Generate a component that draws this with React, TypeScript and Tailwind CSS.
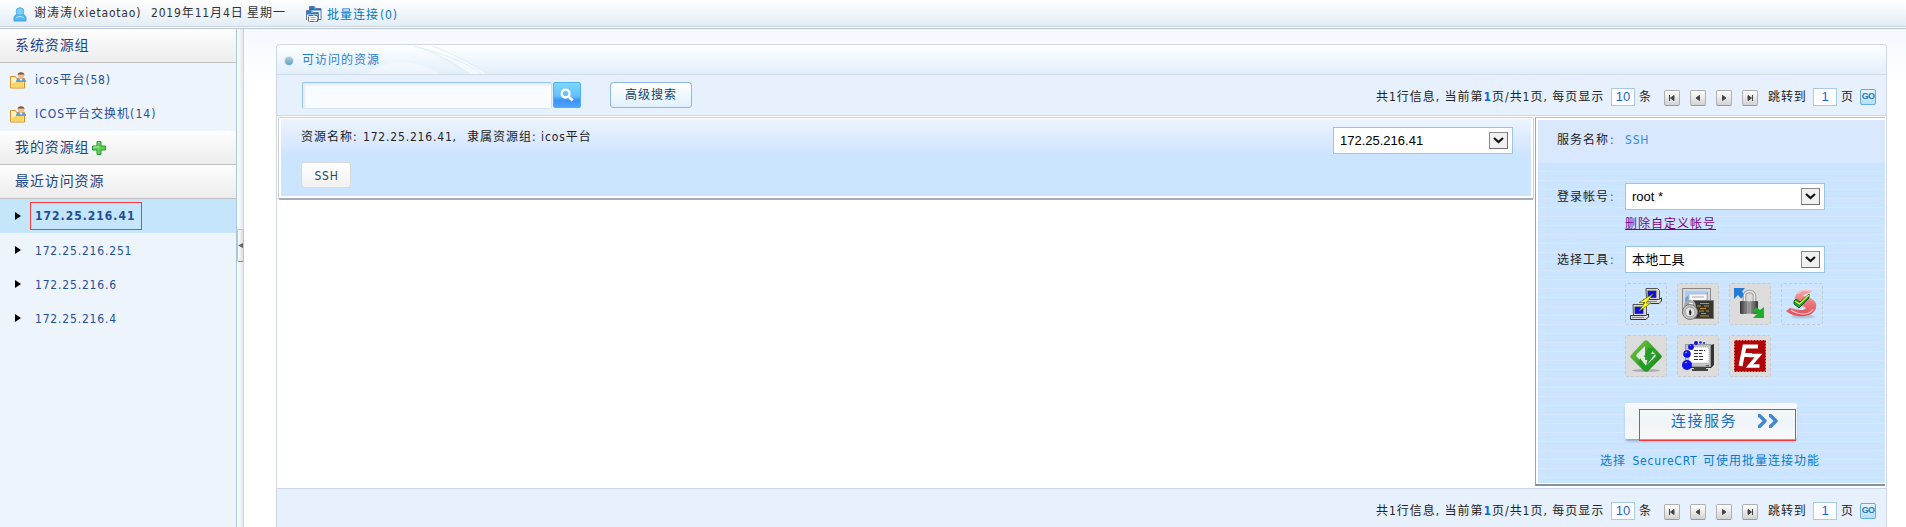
import React from "react";

const F = "font-['DejaVu_Sans_Condensed','Noto_Sans_CJK_SC',sans-serif]";

function L({ children, className = "" }: { children: React.ReactNode; className?: string }) {
  return <span className={`tracking-[0.8px] ${className}`}>{children}</span>;
}

function FolderUser() {
  return (
    <svg width="16" height="17" viewBox="0 0 16 17" className="shrink-0">
      <path d="M.5 4.500h5l1 2h8v9.500H.5z" fill="#fff3c4" stroke="#d98f27" />
      <path d="M1.500 12l6-3 6-2v8h-12z" fill="#f6d566" />
      <path d="M6 10c0-3 2-4 5-4s5 1 5 4z" fill="#5a9fe0" />
      <circle cx="11" cy="4" r="3" fill="#efc093" />
      <path d="M7.500 3.500C7.500 1 9 .3 11 .3S14.500 1 14.500 3.500l-1-1h-5z" fill="#8a4f2a" />
      <path d="M9.500 7l1.500 2L12.500 7z" fill="#fff" />
    </svg>
  );
}

function SideHeading({ children }: { children: React.ReactNode }) {
  return (
    <div className="flex h-[34px] shrink-0 items-center border-b border-[#bfbfbf] bg-gradient-to-b from-[#fdfdfd] to-[#ededed] pl-[15px] text-[14px] tracking-[0.9px] text-[#1c4587]">
      {children}
    </div>
  );
}

function RecentItem({ ip, active = false }: { ip: string; active?: boolean }) {
  return (
    <div className={`flex h-[34px] items-center pl-[15px] ${active ? "bg-[#c5e5fa]" : ""}`}>
      <svg width="6" height="8" viewBox="0 0 6 8"><path d="M0 0l6 4-6 4z" fill="#000" /></svg>
      <span className={active
        ? "ml-[9px] flex h-7 w-28 items-center border border-[#f23c3c] pl-[4px] font-bold tracking-[1px]"
        : "ml-[14px] pt-px tracking-[0.82px]"}>{ip}</span>
    </div>
  );
}

function Pager() {
  const icons = [
    "M5.500 5v6M10 5.500v5L6.500 8z",
    "M9.500 5.500v5L6 8z",
    "M6.500 5.500v5L10 8z",
    "M10.500 5v6M6 5.500v5L9.500 8z",
  ];
  return (
    <div className="flex items-center pr-[10px] text-[12px] text-[#222]">
      <span className="w-[235px] whitespace-nowrap tracking-[0.98px]">
        共1行信息, 当前第<b className="text-[#0a6ae0]">1</b>页/共1页, 每页显示
      </span>
      <span className="flex h-[18px] w-6 items-center justify-center border border-[#a9cbe0] bg-white font-['Liberation_Sans',sans-serif] text-[13px] tracking-normal text-[#1c63d0]">10</span>
      <span className="ml-1 w-[25px]">条</span>
      <span className="mt-0.5 flex gap-[10px]">
        {icons.map((d, i) => (
          <span key={i} className="h-4 w-4 rounded-[2px] border border-[#b0b0b0] border-b-[#999] bg-gradient-to-b from-white to-[#d2d2d2]">
            <svg width="14" height="14" viewBox="1 1 14 14"><path d={d} fill="#444" stroke="#444" strokeWidth="1" /></svg>
          </span>
        ))}
      </span>
      <span className="ml-[10px] w-[45px] whitespace-nowrap tracking-[0.9px]">跳转到</span>
      <span className="flex h-[18px] w-6 items-center justify-center border border-[#a9cbe0] bg-white font-['Liberation_Sans',sans-serif] text-[13px] tracking-normal text-[#1c63d0]">1</span>
      <span className="ml-1 w-[19px]">页</span>
      <span className="flex h-4 w-4 items-center justify-center rounded-[2px] border border-[#62aede] bg-gradient-to-b from-[#e6f6ff] to-[#b5def7] font-['Liberation_Sans',sans-serif] text-[9px] font-bold tracking-[-0.8px] text-[#2a78b8]">GO</span>
    </div>
  );
}

function Select({ value, className, textClass = "" }: { value: string; className: string; textClass?: string }) {
  return (
    <div className={`flex items-center justify-between border border-[#9cc4e4] bg-white pr-1 pl-[6px] font-['Liberation_Sans','Noto_Sans_CJK_SC',sans-serif] text-[13px] text-black ${className}`}>
      <span className={textClass}>{value}</span>
      <span className="flex h-[17px] w-[19px] items-center justify-center border border-t-[#8a8a8a] border-r-[#707070] border-b-[#707070] border-l-[#8a8a8a] bg-[#f0f0f0]">
        <svg width="11" height="7" viewBox="0 0 11 7"><path d="M1 1l4.500 4L10 1" fill="none" stroke="#111" strokeWidth="2.200" /></svg>
      </span>
    </div>
  );
}

function Field({ label }: { label: string }) {
  return <span className="w-[68px] whitespace-nowrap">{label}<span className="ml-px text-[#456]">:</span></span>;
}

function Tool({ children, gray = false }: { children: React.ReactNode; gray?: boolean }) {
  return (
    <div className={`flex h-[42px] w-[42px] items-center justify-center rounded-[3px] border border-dashed border-[#c6cacd] ${gray ? "bg-[#dcdcdc]" : ""}`}>
      <svg width="32" height="32" viewBox="0 0 32 32">{children}</svg>
    </div>
  );
}

function Computer({ x, y }: { x: number; y: number }) {
  return (
    <g transform={`translate(${x} ${y})`}>
      <path d="M3 .5h11.500l2 2v9h-13z" fill="#d8d8d8" stroke="#555" />
      <rect x="5" y="3" width="8" height="6.500" fill="#0a0af0" stroke="#333" strokeWidth=".8" />
      <path d="M.5 11.500h15l3-1.500v3l-2.500 2.500H.5z" fill="#dedede" stroke="#333" />
      <path d="M2 13.500h12" stroke="#888" />
    </g>
  );
}

function Tools() {
  return (
    <div className="grid w-[198px] grid-cols-[repeat(4,42px)] gap-[10px]">
      <Tool>
        <Computer x={13} y={0} />
        <Computer x={0} y={16} />
        <path d="M23 6L9 14.500h6L9 23l12-8h-5z" fill="#ffff16" stroke="#77770b" strokeWidth=".8" />
      </Tool>
      <Tool gray>
        <rect x=".5" y=".5" width="28" height="25" fill="#d4d9de" stroke="#888" />
        <rect x="3" y="3" width="23" height="18" fill="#68a2ed" />
        <path d="M3 10C10 3 18 11 26 4V3H3z" fill="#a8cdfa" />
        <rect x="7" y="6" width="18" height="15" fill="#f7f7f7" stroke="#bbb" />
        <path d="M10 9h12" stroke="#aaa" />
        <rect x="11.500" y="12.500" width="20" height="18" fill="#353531" stroke="#777" />
        <path d="M18 15.500h9M15 18h4m3 0h5M18 20.500h6M17 23h5m2 0h3M19 25.500h5M18 28h9" stroke="#bd9332" />
        <path d="M3.500 20v-3c0-5 9-5 9 0v3" fill="none" stroke="#aaa" strokeWidth="2.500" />
        <circle cx="8" cy="24" r="7.500" fill="#c6c6c6" stroke="#777" />
        <circle cx="8" cy="24" r="5" fill="#e5e5e5" stroke="#999" />
        <path d="M8 21l1.500 3L9 27H7.500L7 24z" fill="#222" />
      </Tool>
      <Tool gray>
        <defs><linearGradient id="lock"><stop stopColor="#333" /><stop offset=".5" stopColor="#b5b5b5" /><stop offset="1" stopColor="#333" /></linearGradient></defs>
        <path d="M0 0h11L8 3.500l3 4-4 3-3-3.500-4 4z" fill="#247bd8" />
        <path d="M10.500 14V8c0-6 10-6 10 0v6" fill="none" stroke="#999" strokeWidth="3.600" />
        <path d="M10.500 14V8c0-6 10-6 10 0v6" fill="none" stroke="#eee" strokeWidth="1.500" />
        <rect x="6" y="13" width="18" height="13" rx="1" fill="url(#lock)" />
        <path d="M9 14v11M12 14v11M15 14v11M18 14v11M21 14v11" stroke="#555" opacity=".6" />
        <path d="M30 19v11H19l4-4-4-3 3-4 4 3z" fill="#1eaf29" />
      </Tool>
      <Tool>
        <defs><linearGradient id="swirl" y2="1" x2="0"><stop stopColor="#f7a0a2" /><stop offset="1" stopColor="#dd4f56" /></linearGradient></defs>
        <ellipse cx="17" cy="28.500" rx="12" ry="2" fill="#94a9be" opacity=".5" />
        <path d="M26 3C19 0 9 3 9 11c0 6 9 7 11 9-3 4-11 1-16 0l-4 3c6 6 26 9 30-3 2-8-6-10-13-12 2-3 6-2 9-5z" fill="url(#swirl)" />
        <path d="M12 6c3-4 9-4 13-3M5 22c7 5 18 6 22-1" fill="none" stroke="#fbc6c4" strokeWidth="1.200" />
        <path d="M8 13l2-2 4 3 9-8v4L13 20l-5-4z" fill="#14a531" stroke="#143a10" strokeWidth=".8" />
        <path d="M9 13l4.500 3L23 7" fill="none" stroke="#f3e93a" strokeWidth="1.300" />
      </Tool>
      <Tool gray>
        <defs><linearGradient id="leaf" x2="1" y2="1"><stop stopColor="#77cf3e" /><stop offset="1" stopColor="#087b19" /></linearGradient></defs>
        <ellipse cx="16" cy="30.500" rx="14" ry="1.500" fill="#aaa" />
        <path d="M14 1q2-1.500 4 0l13 14q1.500 1.500 0 3L18 31q-2 1.500-4 0L1 18q-1.500-1.500 0-3z" fill="url(#leaf)" />
        <path d="M15 6L7 14q-1.500 1.500 0 3l9 9 9-9q1.500-1.500 0-3l-3-3-4 9h-3z" fill="#e4e9e1" />
        <path d="M18 8h6l-3 6h4l-9 12 2-9h-4zM10 18l6 8 6-6v6l-6 5-7-7z" fill="#239d27" />
      </Tool>
      <Tool gray>
        <path d="M5 5h24l3-1v21l-3 3H5z" fill="#333" />
        <rect x="3.500" y="4.500" width="25" height="22" fill="#c5c5c5" stroke="#999" />
        <rect x="7" y="7" width="20" height="16" rx="2" fill="#fff" stroke="#aaa" strokeDasharray="1 1" />
        <path d="M12 10.500h11M12 13.500h8M12 16.500h10M12 19.500h9" stroke="#333" strokeWidth="1.200" strokeDasharray="4 1" />
        <path d="M12 27h12v2h2v2H10v-2h2z" fill="#444" />
        <path d="M24 25.500h3" stroke="#e22" />
        <g fill="#1010ef"><circle cx="5" cy="25" r="5" /><circle cx="5" cy="14" r="3.800" /><circle cx="9" cy="7" r="2.900" /><circle cx="14" cy="3" r="2" /><circle cx="18.500" cy="2.500" r="1.300" /><circle cx="22" cy="3" r="1" /></g>
        <path d="M3 23l2-1M3 13l2-1M8 6l1-1" stroke="#8a9fff" strokeWidth="1.300" />
      </Tool>
      <Tool gray>
        <rect width="32" height="32" fill="#b00609" />
        <rect x=".5" y=".5" width="31" height="31" fill="none" stroke="#eec4c4" strokeDasharray="1 2" />
        <path d="M6.500 26L10.500 6.500H24M9 15h9" fill="none" stroke="#fff" strokeWidth="4" />
        <path d="M14.500 15.500h10L15.500 26h10" fill="none" stroke="#fff" strokeWidth="3.500" />
      </Tool>
    </div>
  );
}

export default function App() {
  return (
    <div className={`flex h-[527px] w-full flex-col overflow-hidden bg-white text-[12px] tracking-[1px] ${F}`}>
      <header className="flex h-[29px] shrink-0 items-center border-b border-[#b9c6d7] bg-[linear-gradient(#fff_0,#e3edf6_26px,#c9d2dd_26px,#c9d2dd_27px,#fff_27px)] pb-[3px] text-[#333]">
        <svg width="14" height="15" viewBox="0 0 14 15" className="mt-1 ml-[13px] shrink-0">
          <path d="M1 11c0-3 3-4 6-4s6 1 6 4v3H1z" fill="#55b6f0" stroke="#4aa3dc" />
          <circle cx="7" cy="4.500" r="3.800" fill="#7bd0fb" stroke="#4ab0ea" />
          <path d="M3 11c2-2 6-2 8 0" stroke="#b8eaff" fill="none" />
        </svg>
        <span className="ml-[7px] w-[117px] whitespace-nowrap text-[#333]">谢涛涛<L>(xietaotao)</L></span>
        <span className="w-[96px] whitespace-nowrap"><L className="tracking-[0.6px]">2019</L>年<L className="tracking-[0.6px]">11</L>月<L className="tracking-[0.6px]">4</L>日</span>
        <span className="w-[59px] whitespace-nowrap">星期一</span>
        <svg width="17" height="17" viewBox="0 0 17 17" className="mt-1 shrink-0">
          <path d="M3.500 8V.5h5l1 2h5.500v11h-2" fill="#fff" stroke="#5d7ba0" />
          <path d="M4 1h4l1 2h6v1.500H4z" fill="#1b78c4" />
          <path d="M.5 14V4.500h5l1 2h6v8" fill="#fff" stroke="#5d7ba0" />
          <path d="M1 5h4l1 2h6v1.500H1z" fill="#2581cb" />
          <path d="M2.500 9.500h9v6h-9z" fill="#f8f8f8" stroke="#666" strokeDasharray="5 1" />
          <path d="M4.500 11.500h5M4.500 13.500h5" stroke="#aaa" />
        </svg>
        <span className="mt-[5px] ml-[4px] text-[#0077c8]">批量连接<L className="ml-px">(0)</L></span>
      </header>
      <div className="flex min-h-0 flex-1">
        <aside className="flex w-[237px] shrink-0 flex-col border-r border-[#a8c8dc] bg-[#edf4fc] text-[#1f4f96]">
          <SideHeading>系统资源组</SideHeading>
          <div className="flex h-[34px] items-center pl-[10px]"><FolderUser /><span className="ml-[9px]"><L>icos</L>平台<L>(58)</L></span></div>
          <div className="flex h-[34px] items-center pl-[10px]"><FolderUser /><span className="ml-[9px]"><L className="tracking-[1px]">ICOS</L>平台交换机<L className="tracking-[1.100px]">(14)</L></span></div>
          <SideHeading>我的资源组
            <svg width="14" height="14" viewBox="0 0 14 14" className="mt-px ml-[2px]"><path d="M5 .5h4V5h4.500v4H9v4.500H5V9H.5V5H5z" fill="#63cd54" stroke="#229638" /><path d="M6 1.500h1.500M1.500 6H7" stroke="#b4efaa" /></svg>
          </SideHeading>
          <SideHeading>最近访问资源</SideHeading>
          <RecentItem ip="172.25.216.41" active />
          <RecentItem ip="172.25.216.251" />
          <RecentItem ip="172.25.216.6" />
          <RecentItem ip="172.25.216.4" />
        </aside>
        <div className="w-[7px] shrink-0 border-r border-[#cdd5e0] bg-gradient-to-r from-white to-[#e2e8ef] pt-[200px]">
          <div className="flex h-[33px] w-[7px] items-center rounded-[2px] border border-[#c4c4c4] border-b-[#888] bg-gradient-to-r from-white to-[#ddd]">
            <svg width="5" height="5" viewBox="0 0 5 5"><path d="M5 0v5L0 2.500z" fill="#666" /></svg>
          </div>
        </div>
        <main className="flex min-w-0 flex-1 bg-[linear-gradient(#f4f9ff,#fff_58px)] pt-[15px] pr-[19px] pl-8">
          <section className="flex min-w-0 flex-1 flex-col rounded-t-[4px] border-x border-t border-[#cfd7e6] bg-white">
            <div className="flex h-[30px] shrink-0 items-center rounded-t-[4px] border-b border-[#cfdbe8] bg-gradient-to-b from-[#fdffff] to-[#e2effb] text-[#1f80dc]">
              <span className="mt-0.5 ml-[8px] h-[8px] w-[8px] rounded-full bg-gradient-to-b from-[#a9cbdc] to-[#5ba3c4] shadow-[0_0_0_1px_#dfe3e8]" />
              <span className="mt-px ml-[9px] w-[80px] whitespace-nowrap">可访问的资源</span>
              <svg width="180" height="29" viewBox="0 0 180 29" className="-ml-4">
                <path d="M0 29C25 14 42 12 75 29z" fill="#fff" opacity=".35" />
                <path d="M48 1h27l46 28h-17C87 15 70 7 48 1z" fill="#fff" opacity=".55" />
                <path d="M48 1c24 7 40 18 56 28M48 1c30 8 52 16 68 28M66 1c18 6 36 16 55 28" fill="none" stroke="#e0eff9" />
              </svg>
            </div>
            <div className="flex h-[41px] shrink-0 items-center border-b border-[#cdd8e7] bg-[#e7f1fe] pl-[25px]">
              <div className="h-[27px] w-[250px] rounded-[2px] border border-t-[#98c3e8] border-r-[#d0e1f3] border-b-[#d5e4f3] border-l-[#98c3e8] bg-[#f8fbff] shadow-[inset_2px_2px_2px_#e4edf7]" />
              <div className="ml-px flex h-[26px] w-7 items-center justify-center rounded-[2px] border border-[#4eb0f4] bg-[linear-gradient(#7fd8fe_0,#62bffb_55%,#3e91f6_72%,#4da5fa)]">
                <svg width="14" height="14" viewBox="0 0 15 15" className="-ml-px"><circle cx="6" cy="6" r="4.200" fill="none" stroke="#fff" strokeWidth="2.500" /><path d="M9.500 9.500l4 4" stroke="#fff" strokeWidth="3" /></svg>
              </div>
              <div className="ml-[29px] flex h-[26px] w-[82px] items-center justify-center rounded-[4px] border border-[#8eb8e2] border-b-[#a7b2bb] bg-gradient-to-b from-white to-[#e0f1fd] pb-px text-[#124468]">高级搜索</div>
              <div className="mt-[3px] ml-auto"><Pager /></div>
            </div>
            <div className="flex min-h-0 flex-1 items-start pt-px pl-px">
              <div className="h-[83px] w-[1256px] shrink-0 rounded-[2px] border border-[#ccd0da] border-b-2 border-b-[#a6adb6] bg-white p-[2px] pt-px">
                <div className="flex h-full bg-[linear-gradient(#edf4ff,#d5e6ff_30px,#cbe4ff_36px)] pr-[18px] pl-[20px]">
                  <div className="flex flex-1 flex-col items-start pt-[9px] text-[#222]">
                    <span className="flex h-[18px] leading-[18px] whitespace-nowrap"><span className="w-[62px]">资源名称:</span><span className="w-[104px] tracking-[0.82px]">172.25.216.41,</span><span className="w-[74px]">隶属资源组:</span><span><L className="tracking-[0.9px]">icos</L>平台</span></span>
                    <div className="mt-[16px] flex h-[26px] w-[50px] items-center justify-center rounded-[3px] border border-[#d9d9d9] bg-gradient-to-b from-white to-[#f1f1f1] pt-px pl-px tracking-[0.8px] text-[#1c4b68]">SSH</div>
                  </div>
                  <Select value="172.25.216.41" className="mt-[8px] h-[27px] w-[180px]" textClass="tracking-normal" />
                </div>
              </div>
              <div className="ml-px h-[369px] w-[350px] border-t border-b-2 border-l border-t-[#b9bdc7] border-b-[#84919e] border-l-[#9aa5b4] bg-white pt-[2px] pb-px pl-[2px]">
                <div className="h-full bg-[linear-gradient(#dae8ff_42px,transparent_42px),repeating-linear-gradient(#cbe4ff_0,#cbe4ff_6px,#d5e8ff_6px,#d5e8ff_7px,#cbe4ff_7px,#cbe4ff_9px)] pt-[10px] pl-[19px] text-[#222]">
                  <div className="flex h-5 items-center"><Field label="服务名称" /><span className="tracking-[0.8px] text-[#3588dd]">SSH</span></div>
                  <div className="mt-[33px] flex h-[27px] items-center"><Field label="登录帐号" /><Select value="root *" className="h-[27px] w-[200px]" textClass="tracking-normal" /></div>
                  <a className="mt-[5px] ml-[68px] block h-[18px] text-[12px] leading-[18px] text-[#800080] underline">删除自定义帐号</a>
                  <div className="mt-[13px] flex h-[27px] items-center"><Field label="选择工具" /><Select value="本地工具" className="h-[27px] w-[200px]" textClass="tracking-[0.2px]" /></div>
                  <div className="mt-[10px] ml-[68px]"><Tools /></div>
                  <div className="relative mt-[26px] ml-[68px] flex h-[36px] w-[172px] items-center rounded-[2px] bg-gradient-to-b from-[#f8fafc] via-[#eef4f8] to-[#f8f8f8] pl-[46px] shadow-[0_3px_3px_-1px_#8aa0b8]">
                    <span className="w-[86px] whitespace-nowrap text-[15px] tracking-[1.500px] text-[#1c6fbf]">连接服务</span>
                    <svg width="21" height="14" viewBox="0 0 21 14"><path d="M1 1.500h1.500L8 7l-5.500 5.500H1M12 1.500h1.500L19 7l-5.500 5.500H12" fill="none" stroke="#4288d0" strokeWidth="3.500" strokeLinejoin="round" /></svg>
                    <span className="absolute top-[6px] left-[14px] h-8 w-[157px] border border-[#ee3a3a]" />
                  </div>
                  <div className="mt-[13px] ml-[43px] h-[18px] leading-[18px] whitespace-nowrap text-[#087bc7]">选择 <L className="ml-[2px]">SecureCRT</L> <span className="ml-px">可使用批量连接功能</span></div>
                </div>
              </div>
            </div>
            <footer className="flex h-[39px] shrink-0 items-center justify-end border-t border-[#cdd8e7] bg-[#e7f1fe] pt-[6px]"><Pager /></footer>
          </section>
        </main>
      </div>
    </div>
  );
}
